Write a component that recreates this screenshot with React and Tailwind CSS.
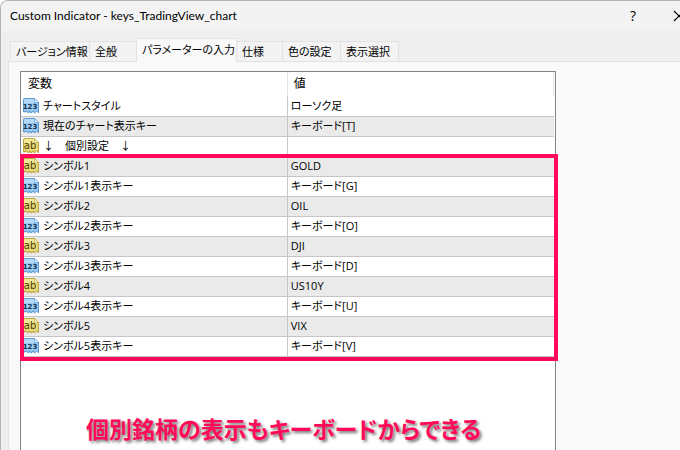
import clsx from 'clsx';

const tabs = [
    { label: 'バージョン情報', width: 'w-20' },
    { label: '全般', width: 'w-[47px]' },
    { label: 'パラメーターの入力', width: 'w-[100px]', active: true },
    { label: '仕様', width: 'w-[46px]' },
    { label: '色の設定', width: 'w-[58px]' },
    { label: '表示選択', width: 'w-[58px]' },
];

const params = [
    { type: 'int', name: 'チャートスタイル', value: 'ローソク足' },
    { type: 'int', name: '現在のチャート表示キー', value: 'キーボード[T]' },
    { type: 'string', name: '↓　個別設定　↓', value: '' },
    { type: 'string', name: 'シンボル1', value: 'GOLD' },
    { type: 'int', name: 'シンボル1表示キー', value: 'キーボード[G]' },
    { type: 'string', name: 'シンボル2', value: 'OIL' },
    { type: 'int', name: 'シンボル2表示キー', value: 'キーボード[O]' },
    { type: 'string', name: 'シンボル3', value: 'DJI' },
    { type: 'int', name: 'シンボル3表示キー', value: 'キーボード[D]' },
    { type: 'string', name: 'シンボル4', value: 'US10Y' },
    { type: 'int', name: 'シンボル4表示キー', value: 'キーボード[U]' },
    { type: 'string', name: 'シンボル5', value: 'VIX' },
    { type: 'int', name: 'シンボル5表示キー', value: 'キーボード[V]' },
];

function TypeIcon({ type }) {
    const isInt = type === 'int';

    return (
        <svg className="h-4 w-4 shrink-0" viewBox="0 0 16 16" fill="none">
            <path
                d="M0 2Q0 0 2 0H11.5L16 4.5V15L14.5 14.5 13.5 13 12 15.5 10 14 8 15.5 6.5 14 5 15.5 3.5 13.5 2 14.5 0 14Z"
                fill={isInt ? '#5b9bd1' : '#bba73f'}
            />
            <path
                d="M1 2.5Q1 1 2.5 1H11L15 5V13.5L13.5 12 12 14 10 12.5 8 14 6.5 12.5 5 14 3.5 12.5 1 13Z"
                fill={isInt ? '#9ccbf3' : '#eadb78'}
            />
            <path d="M1 2.5Q1 1 2.5 1H11V5H1Z" fill={isInt ? '#b5d9f7' : '#f3e896'} />
            <path
                d="M11.5 .5V4.5H15.5Z"
                fill={isInt ? '#e0f0fd' : '#fdf8cf'}
                stroke={isInt ? '#6ba5d6' : '#c4b14c'}
                strokeWidth=".7"
            />
            <text
                x="7"
                y="11"
                textAnchor="middle"
                fill={isInt ? '#12304f' : '#4a3d08'}
                className={clsx(
                    "font-['DejaVu_Sans',sans-serif]",
                    isInt ? 'text-[7px] font-bold' : 'text-[10px]',
                )}
            >
                {isInt ? '123' : 'ab'}
            </text>
        </svg>
    );
}

function TitleBar() {
    return (
        <header className="flex h-[30px] items-center bg-[#f3f3f3] pl-[9px]">
            <h1 className="flex-1 font-['Lato','Noto_Sans_CJK_JP',sans-serif] text-xs">
                Custom Indicator - keys_TradingView_chart
            </h1>
            <button aria-label="Help" className="w-5 text-sm">?</button>
            <button aria-label="Close" className="ml-[30px] w-[7px] overflow-hidden">
                <svg className="h-3 w-3" viewBox="0 0 12 12" stroke="currentColor" strokeWidth="1.2">
                    <path d="M1 1 11 11M11 1 1 11" />
                </svg>
            </button>
        </header>
    );
}

function Tabs() {
    return (
        <div role="tablist" className="flex h-[30px] items-end pl-[9px] text-[11px]">
            {tabs.map((tab) => (
                <button
                    key={tab.label}
                    role="tab"
                    aria-selected={Boolean(tab.active)}
                    className={clsx(
                        'shrink-0 border-t border-r border-[#e2e2e2] px-[5px] text-left whitespace-nowrap first:border-l',
                        tab.width,
                        tab.active ? 'relative -mb-px h-6 bg-[#f9f9f9] pb-px' : 'h-5 bg-[#f3f3f3]',
                    )}
                >
                    {tab.label}
                </button>
            ))}
        </div>
    );
}

function ParamTable() {
    return (
        <table className="w-full table-fixed border-collapse text-left">
            <thead>
                <tr className="h-6">
                    <th className="w-1/2 border-r border-[#e2e2e2] pl-[7px] font-normal">変数</th>
                    <th className="border-r border-[#e2e2e2] pl-1.5 font-normal">値</th>
                </tr>
            </thead>
            <tbody className="text-[11px]">
                {params.map((param) => (
                    <tr key={param.name} className="h-5 border-b border-[#c6c6c6] even:bg-[#eaeaea]">
                        <td className="border-r border-[#c6c6c6] p-0 pl-0.5">
                            <div className="flex h-[19px] items-center gap-1">
                                <TypeIcon type={param.type} />
                                <span className="whitespace-pre">{param.name}</span>
                            </div>
                        </td>
                        <td className="p-0 pl-[3px]">{param.value}</td>
                    </tr>
                ))}
            </tbody>
        </table>
    );
}

export default function App() {
    return (
        <div className="flex min-h-screen flex-col overflow-hidden rounded-tl-lg border-t border-l border-[#b5b5b5] bg-[#efefef] font-['Open_Sans','Noto_Sans_CJK_JP',sans-serif] text-xs leading-4 text-black [font-feature-settings:'palt']">
            <TitleBar />
            <Tabs />
            <main className="ml-[7px] flex flex-1 border-t border-l border-[#e2e2e2] bg-[#f9f9f9] pt-[9px] pl-[11px]">
                <div className="relative mr-[124px] flex flex-1 flex-col border-t border-r border-l border-[#82828c] bg-white pr-px">
                    <ParamTable />
                    <div className="pointer-events-none absolute -right-[3px] top-[82px] -left-px h-[207px] border-4 border-[#ff0a5b]" />
                    <p className="mt-14 pr-2 text-center text-[23px] leading-8 font-bold whitespace-nowrap text-[#ff0a5b] [-webkit-text-stroke:4px_#fff] [paint-order:stroke_fill] [text-shadow:2px_2px_3px_#777]">
                        個別銘柄の表示もキーボードからできる
                    </p>
                </div>
            </main>
        </div>
    );
}
